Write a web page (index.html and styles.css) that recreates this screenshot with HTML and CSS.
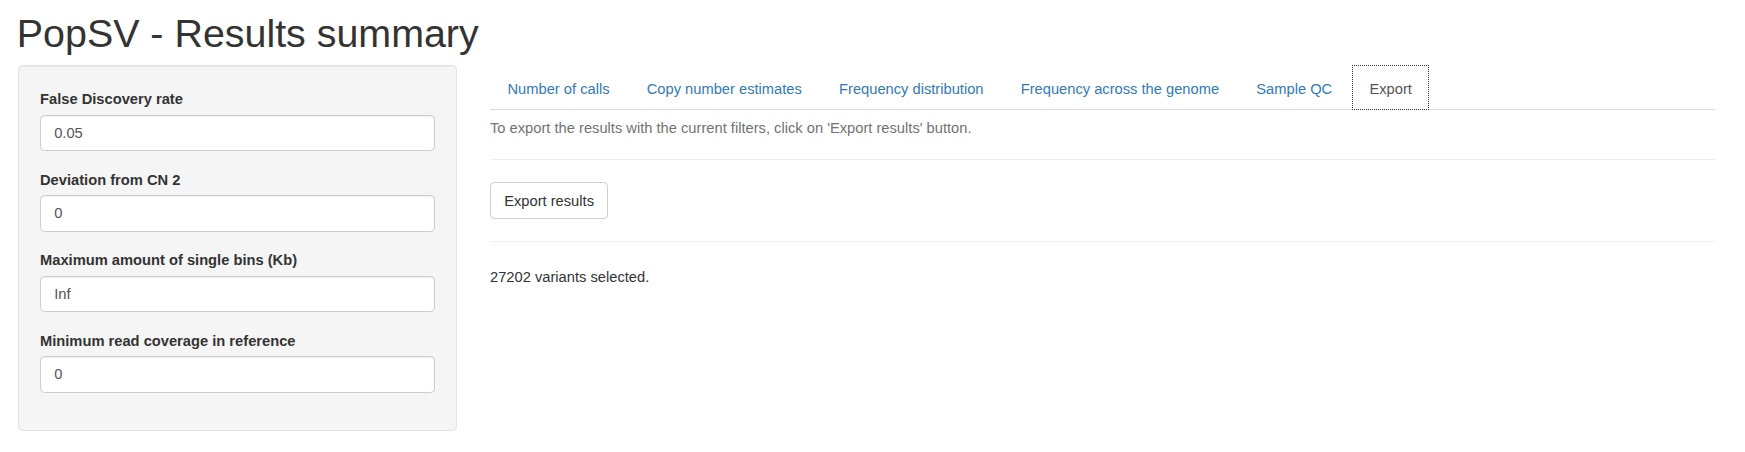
FILE: index.html
```html
<!DOCTYPE html>
<html lang="en">
<head>
<meta charset="utf-8">
<title>PopSV - Results summary</title>
<link rel="stylesheet" href="styles.css">
</head>
<body>
<h1 class="title">PopSV - Results summary</h1>
<div class="layout">
  <aside class="sidebar">
    <form class="well">
      <div class="form-group">
        <label class="control-label" for="fdr">False Discovery rate</label>
        <input class="form-control" id="fdr" type="text" value="0.05">
      </div>
      <div class="form-group">
        <label class="control-label" for="cn">Deviation from CN 2</label>
        <input class="form-control" id="cn" type="text" value="0">
      </div>
      <div class="form-group">
        <label class="control-label" for="bins">Maximum amount of single bins (Kb)</label>
        <input class="form-control" id="bins" type="text" value="Inf">
      </div>
      <div class="form-group">
        <label class="control-label" for="cov">Minimum read coverage in reference</label>
        <input class="form-control" id="cov" type="text" value="0">
      </div>
    </form>
  </aside>
  <main class="main">
    <ul class="nav-tabs">
      <li><a href="#">Number of calls</a></li>
      <li><a href="#">Copy number estimates</a></li>
      <li><a href="#">Frequency distribution</a></li>
      <li><a href="#">Frequency across the genome</a></li>
      <li><a href="#">Sample QC</a></li>
      <li class="active"><a href="#">Export</a></li>
    </ul>
    <div class="tab-content">
      <div class="help">To export the results with the current filters, click on 'Export results' button.</div>
      <hr class="sep sep-first">
      <button class="btn" type="button">Export results</button>
      <hr class="sep">
      <div class="status">27202 variants selected.</div>
    </div>
  </main>
</div>
</body>
</html>
```

FILE: styles.css
```css
html, body {
  margin: 0;
  padding: 0;
  background: #fff;
}

body {
  font-family: "Liberation Sans", Arial, Helvetica, sans-serif;
  font-size: 14.7px;
  line-height: 22px;
  color: #333;
}

.title {
  font-size: 39.4px;
  font-weight: 400;
  line-height: 1.1;
  color: #333;
  margin: 12.4px 0 9.3px 16.8px;
}

.layout {
  display: flex;
  gap: 33px;
  padding: 0 30px 0 18px;
  align-items: flex-start;
}

.sidebar {
  width: 439px;
  flex: none;
}

.well {
  display: block;
  margin: 0;
  padding: 21px;
  background: #f5f5f5;
  border: 1px solid #e3e3e3;
  border-radius: 4.4px;
  box-shadow: inset 0 1px 1px rgba(0, 0, 0, 0.05);
}

.form-group {
  margin-bottom: 16.5px;
}

.control-label {
  display: block;
  font-weight: bold;
  padding-top: 1px;
  margin-bottom: 4.5px;
  line-height: 22px;
}

.form-control {
  display: block;
  box-sizing: border-box;
  width: 100%;
  height: 36.5px;
  margin: 0;
  padding: 6.6px 13.2px;
  font-family: inherit;
  font-size: 14.7px;
  line-height: 22px;
  color: #555;
  background: #fff;
  border: 1px solid #ccc;
  border-radius: 4.4px;
  box-shadow: inset 0 1px 1px rgba(0, 0, 0, 0.075);
}

.main {
  flex: 1;
  min-width: 0;
}

.nav-tabs {
  display: flex;
  list-style: none;
  margin: 0;
  padding: 0;
  border-bottom: 1px solid #ddd;
}

.nav-tabs li {
  margin-bottom: -1px;
}

.nav-tabs a {
  display: block;
  padding: 11.5px 16.5px 9.5px;
  margin-right: 2.2px;
  line-height: 22px;
  color: #337ab7;
  text-decoration: none;
  border: 1px solid transparent;
  border-radius: 4.4px 4.4px 0 0;
}

.nav-tabs .active a {
  color: #555;
  background: #fff;
  border: 1px dotted #333;
  border-radius: 0;
}

.tab-content {
  padding-top: 7px;
}

.help {
  color: #737373;
}

.sep {
  margin: 22px 0;
  border: 0;
  border-top: 1px solid #eee;
  height: 0;
}

.sep-first {
  margin-top: 20px;
}

.btn {
  display: inline-block;
  padding: 6.6px 13.2px;
  font-family: inherit;
  font-size: 14.7px;
  line-height: 22px;
  color: #333;
  background: #fff;
  border: 1px solid #ccc;
  border-radius: 4.4px;
  cursor: pointer;
}

.status {
  padding-top: 2px;
  color: #333;
}
```
